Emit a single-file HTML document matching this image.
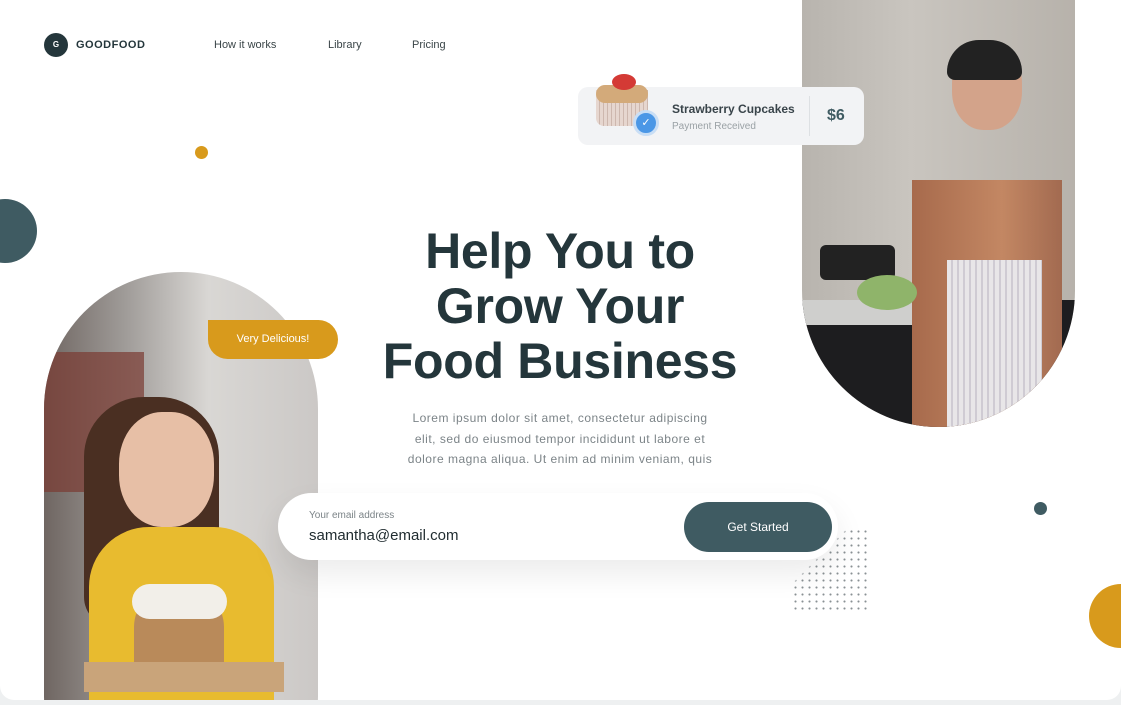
<!DOCTYPE html>
<html style="overflow:hidden;height:705px"><head><style>
*{margin:0;padding:0;box-sizing:border-box}
body{width:1121px;height:705px;background:#eef0f1;font-family:"Liberation Sans",sans-serif;position:relative;overflow:hidden}
.card{position:absolute;left:0;top:0;width:1121px;height:700px;background:#fff;border-radius:0 0 14px 14px;overflow:hidden}
.abs{position:absolute}
.nav{font-size:11px;color:#3a4548;top:39px}
</style></head><body><div class="card">
<div class="abs" style="left:44px;top:33px;width:24px;height:24px;border-radius:50%;background:#24363b;color:#fff;font-size:8px;font-weight:bold;text-align:center;line-height:24px">G</div>
<div class="abs" style="left:76px;top:39px;font-size:11px;font-weight:bold;color:#24363b;letter-spacing:.5px">GOODFOOD</div>
<div class="abs nav" style="left:214px">How it works</div>
<div class="abs nav" style="left:328px">Library</div>
<div class="abs nav" style="left:412px">Pricing</div>
<div class="abs" style="left:195px;top:146px;width:13px;height:13px;border-radius:50%;background:#d89a1c"></div>
<div class="abs" style="left:-27px;top:199px;width:64px;height:64px;border-radius:50%;background:#3f5b62"></div>
<div class="abs" style="left:1034px;top:502px;width:13px;height:13px;border-radius:50%;background:#3f5b62"></div>
<div class="abs" style="left:1089px;top:584px;width:64px;height:64px;border-radius:50%;background:#d89a1c"></div>
<!-- right photo -->
<div class="abs" style="left:802px;top:-140px;width:273px;height:567px;border-radius:137px;overflow:hidden;background:linear-gradient(90deg,#b8b4ae 0%,#c9c5bf 40%,#b7b2ab 100%)">
 <div class="abs" style="left:0;top:440px;width:273px;height:140px;background:#1d1d1f"></div>
 <div class="abs" style="left:0;top:440px;width:150px;height:25px;background:#cfcfcd"></div>
 <div class="abs" style="left:110px;top:320px;width:150px;height:260px;background:linear-gradient(90deg,#a76a4c,#c38763 60%,#a26a50)"></div>
 <div class="abs" style="left:145px;top:400px;width:95px;height:180px;background:repeating-linear-gradient(90deg,#e8e6e8 0 4px,#cfcbd3 4px 6px)"></div>
 <div class="abs" style="left:150px;top:185px;width:70px;height:85px;border-radius:45%;background:#d3a38a"></div>
 <div class="abs" style="left:145px;top:180px;width:75px;height:40px;border-radius:40px 40px 10px 10px;background:#222"></div>
 <div class="abs" style="left:18px;top:385px;width:75px;height:35px;border-radius:6px;background:#222"></div>
 <div class="abs" style="left:55px;top:415px;width:60px;height:35px;border-radius:50%;background:#8fb46a"></div>
</div>
<!-- left photo -->
<div class="abs" style="left:44px;top:272px;width:274px;height:560px;border-radius:137px;overflow:hidden;background:linear-gradient(90deg,#6f6662 0%,#a09c99 30%,#d9d7d4 60%,#cbc8c6 100%)">
 <div class="abs" style="left:0;top:80px;width:100px;height:140px;background:#7a3a32;opacity:.7"></div>
 <div class="abs" style="left:40px;top:125px;width:135px;height:230px;border-radius:60px 60px 30px 30px;background:#4a2f22"></div>
 <div class="abs" style="left:75px;top:140px;width:95px;height:115px;border-radius:45%;background:#e7bfa6"></div>
 <div class="abs" style="left:45px;top:255px;width:185px;height:180px;border-radius:60px 60px 0 0;background:#e8bb2f"></div>
 <div class="abs" style="left:90px;top:315px;width:90px;height:90px;border-radius:40px 40px 10px 10px;background:#b98a5a"></div>
 <div class="abs" style="left:88px;top:312px;width:95px;height:35px;border-radius:40px;background:#f2efe9"></div>
 <div class="abs" style="left:40px;top:390px;width:200px;height:30px;background:#c9a47a"></div>
</div>
<div class="abs" style="left:208px;top:320px;width:130px;height:39px;border-radius:0 20px 20px 20px;background:#d89a1c;color:#fff;font-size:11px;text-align:center;line-height:39px">Very Delicious!</div>
<!-- payment card -->
<div class="abs" style="left:578px;top:87px;width:286px;height:58px;border-radius:10px;background:#f2f3f5"></div>
<div class="abs" style="left:809px;top:96px;width:1px;height:40px;background:#dde0e3"></div>
<div class="abs" style="left:596px;top:90px;width:52px;height:36px;border-radius:0 0 8px 8px;background:repeating-linear-gradient(90deg,#e6d6cf 0 3px,#cdb7ae 3px 4px)"></div>
<div class="abs" style="left:596px;top:85px;width:52px;height:18px;border-radius:20px;background:#d3aa7a"></div>
<div class="abs" style="left:612px;top:74px;width:24px;height:16px;border-radius:50%;background:#d43a35"></div>
<div class="abs" style="left:633px;top:110px;width:26px;height:26px;border-radius:50%;background:#4b97e6;border:3px solid #c9def5;color:#fff;font-size:11px;text-align:center;line-height:20px">✓</div>
<div class="abs" style="left:672px;top:102px;font-size:12px;font-weight:bold;color:#39444a">Strawberry Cupcakes</div>
<div class="abs" style="left:672px;top:121px;font-size:10px;color:#9aa1a5">Payment Received</div>
<div class="abs" style="left:827px;top:107px;font-size:16px;font-weight:bold;color:#3f5b62">$6</div>
<!-- hero -->
<div class="abs" style="left:330px;top:224px;width:460px;text-align:center;font-size:50px;font-weight:bold;line-height:55px;color:#24363b;letter-spacing:-.3px">Help You to<br>Grow Your<br>Food Business</div>
<div class="abs" style="left:360px;top:408px;width:400px;text-align:center;font-size:12px;line-height:20.5px;color:#7c8488;letter-spacing:.5px">Lorem ipsum dolor sit amet, consectetur adipiscing<br>elit, sed do eiusmod tempor incididunt ut labore et<br>dolore magna aliqua. Ut enim ad minim veniam, quis</div>
<!-- dots -->
<div class="abs" style="left:792px;top:528px;width:76px;height:82px;background-image:radial-gradient(circle,#8a9194 0.9px,transparent 1.2px);background-size:7px 7px;-webkit-mask:linear-gradient(135deg,transparent 35%,#000 36%)"></div>
<!-- email -->
<div class="abs" style="left:278px;top:493px;width:560px;height:67px;border-radius:34px;background:#fff;box-shadow:0 14px 30px rgba(0,0,0,.08)"></div>
<div class="abs" style="left:309px;top:510px;font-size:10px;color:#7c8488">Your email address</div>
<div class="abs" style="left:309px;top:527px;font-size:15px;color:#1f2b2f">samantha@email.com</div>
<div class="abs" style="left:684px;top:502px;width:148px;height:50px;border-radius:25px;background:#3f5b62;color:#fff;font-size:12px;text-align:center;line-height:50px">Get Started</div>
</div></body></html>
